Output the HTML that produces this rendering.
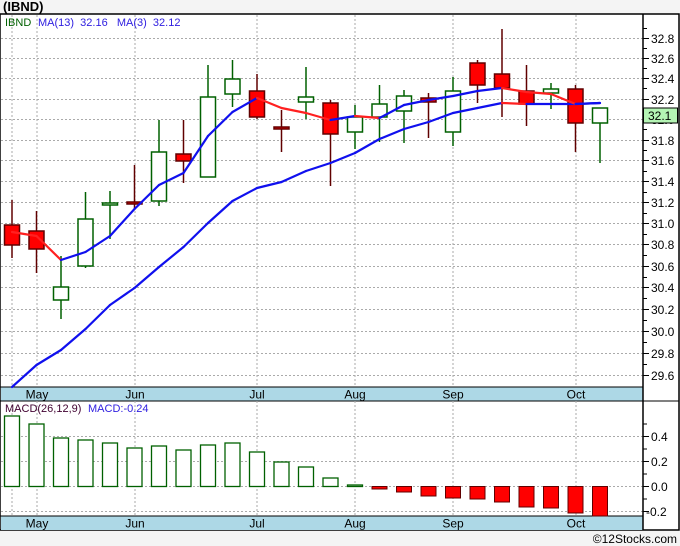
<!DOCTYPE html>
<html><head><meta charset="utf-8"><style>
html,body{margin:0;padding:0;background:#f4f4f4;width:680px;height:546px;overflow:hidden}
svg{display:block}
text{font-family:"Liberation Sans","DejaVu Sans",sans-serif}
</style></head><body>
<svg id="s" width="680" height="546" xmlns="http://www.w3.org/2000/svg">
<rect x="0" y="0" width="680" height="546" fill="#f4f4f4"/>
<text x="3" y="11" font-size="13" font-weight="bold" fill="#000">(IBND)</text>
<rect x="0" y="14" width="679" height="516" fill="#fff" stroke="#000" stroke-width="1.5"/>
<g id="g"></g>
<text x="677" y="543" font-size="12" text-anchor="end" fill="#000">©12Stocks.com</text>
</svg>
<script>
var g=document.getElementById('g'),h='';
function Y(p){return 38+3282*Math.log(32.8/p);}
// date bars
h+='<rect x="1" y="387" width="642" height="14" fill="#add8e6"/><line x1="0" y1="387" x2="643" y2="387" stroke="#000"/><line x1="0" y1="401" x2="679" y2="401" stroke="#000"/>';
h+='<rect x="1" y="516" width="642" height="14" fill="#add8e6"/><line x1="0" y1="516" x2="643" y2="516" stroke="#000"/>';
// grid
var vx=[12,37,135,257,355,453,576];
vx.forEach(function(x){h+='<line x1="'+x+'" y1="15" x2="'+x+'" y2="387" stroke="#aaa" stroke-dasharray="2,2"/><line x1="'+x+'" y1="401" x2="'+x+'" y2="516" stroke="#aaa" stroke-dasharray="2,2"/>';});
for(var p=29.6;p<32.9;p+=0.2){var y=Math.round(Y(p))+0.5;h+='<line x1="1" y1="'+y+'" x2="643" y2="'+y+'" stroke="#aaa" stroke-dasharray="2,2"/>';
h+='<line x1="643" y1="'+y+'" x2="649" y2="'+y+'" stroke="#000"/>';
h+='<text x="651" y="'+(y+4.5)+'" font-size="12" fill="#000">'+p.toFixed(1)+'</text>';
var y2=Math.round(Y(p+0.1))+0.5;h+='<line x1="643" y1="'+y2+'" x2="647" y2="'+y2+'" stroke="#000"/>';}
[[436,'0.4'],[461,'0.2'],[486,'0.0'],[511,'-0.2']].forEach(function(a){h+='<line x1="1" y1="'+(a[0]+.5)+'" x2="643" y2="'+(a[0]+.5)+'" stroke="#aaa" stroke-dasharray="2,2"/><line x1="643" y1="'+(a[0]+.5)+'" x2="649" y2="'+(a[0]+.5)+'" stroke="#000"/><text x="'+(a[1][0]=='-'?646:651)+'" y="'+(a[0]+5)+'" font-size="12" fill="#000">'+a[1]+'</text><line x1="643" y1="'+(a[0]-12)+'" x2="647" y2="'+(a[0]-12)+'" stroke="#000"/>';});
h+='<line x1="643" y1="14" x2="643" y2="530" stroke="#000" stroke-width="1.5"/>';
// month labels
[['May',37],['Jun',135],['Jul',257],['Aug',355],['Sep',453],['Oct',576]].forEach(function(m){h+='<text x="'+m[1]+'" y="398.5" font-size="12" text-anchor="middle" fill="#000">'+m[0]+'</text><text x="'+m[1]+'" y="527.5" font-size="12" text-anchor="middle" fill="#000">'+m[0]+'</text>';});
// candles [bt,bb,wt,wb,red]
var c=[[225,245,200,258,1],[231,249,211,273,1],[287,300,256,319,0],[219,266,192,268,0],[203,205,191,239,0],[202,204,165,208,1],[152,201,120,206,0],[154,161,120,183,1],[97,177,65,177,0],[79,94,60,107,0],[91,117,74,119,1],[127,129,110,152,1],[97,102,67,119,0],[103,134,100,186,1],[117,132,105,149,0],[104,117,85,142,0],[96,111,90,143,0],[98,102,93,138,1],[91,132,77,146,0],[63,85,60,103,1],[74,88,29,117,1],[91,104,65,126,1],[89,93,83,109,0],[89,123,85,152,1],[108,123,108,163,0]];
var mac=[416,424,438,440,443,448,446,450,445,443,452,462,467,478,485,489,492,496,498,499,502,507,508,513,516];
c.forEach(function(d,i){var x=12+i*24.5,col=d[4]?'#600000':'#006000';
h+='<line x1="'+x+'" y1="'+d[2]+'" x2="'+x+'" y2="'+d[3]+'" stroke="'+col+'" stroke-width="1.5"/>';
h+='<rect x="'+(x-7.5)+'" y="'+d[0]+'" width="15" height="'+Math.max(2,d[1]-d[0])+'" fill="'+(d[4]?'#ff0000':'#fff')+'" stroke="'+col+'" stroke-width="1.5"/>';
var m=mac[i],z=486.5;
if(m<z){h+='<rect x="'+(x-7.5)+'" y="'+m+'" width="15" height="'+(z-m)+'" fill="#fff" stroke="#006000" stroke-width="1.3"/>';}
else{h+='<rect x="'+(x-7.5)+'" y="'+z+'" width="15" height="'+(m-z)+'" fill="#ff0000" stroke="#600000" stroke-width="1"/>';}
});
function line(pts){var s='';for(var i=1;i<pts.length;i++){var a=pts[i-1],b=pts[i];s+='<line x1="'+a[0]+'" y1="'+a[1]+'" x2="'+b[0]+'" y2="'+b[1]+'" stroke="'+(b[1]>a[1]?'#ff2020':'#1010ee')+'" stroke-width="2.2" stroke-linecap="round"/>';}return s;}
var m3=[232,236,260,252,236,209,185,173,136,112,98,108,113,120,116,118,105,100,96,91,88,92,94,104,103];
var m13=[387,365,350,329,305,288,267,247,223,201,188,182,171,163,153,139,129,122,113,108,103,104,104,104,103];
h+=line(m13.map(function(y,i){return[12+i*24.5,y];}));
h+=line(m3.map(function(y,i){return[12+i*24.5,y];}));
h+='<rect x="643.5" y="108" width="34" height="15" fill="#b4f4b4" stroke="#000"/><text x="648" y="120" font-size="12" fill="#000">32.1</text>';
h+='<text x="5" y="26" font-size="11" fill="#006000">IBND</text><text x="38" y="26" font-size="11" fill="#3020e0" xml:space="preserve">MA(13)  32.16   MA(3)  32.12</text>';
h+='<text x="5" y="412" font-size="11" fill="#400030">MACD(26,12,9)</text><text x="88" y="412" font-size="11" fill="#3020e0">MACD:-0.24</text>';
g.innerHTML=h;
</script>
</body></html>
